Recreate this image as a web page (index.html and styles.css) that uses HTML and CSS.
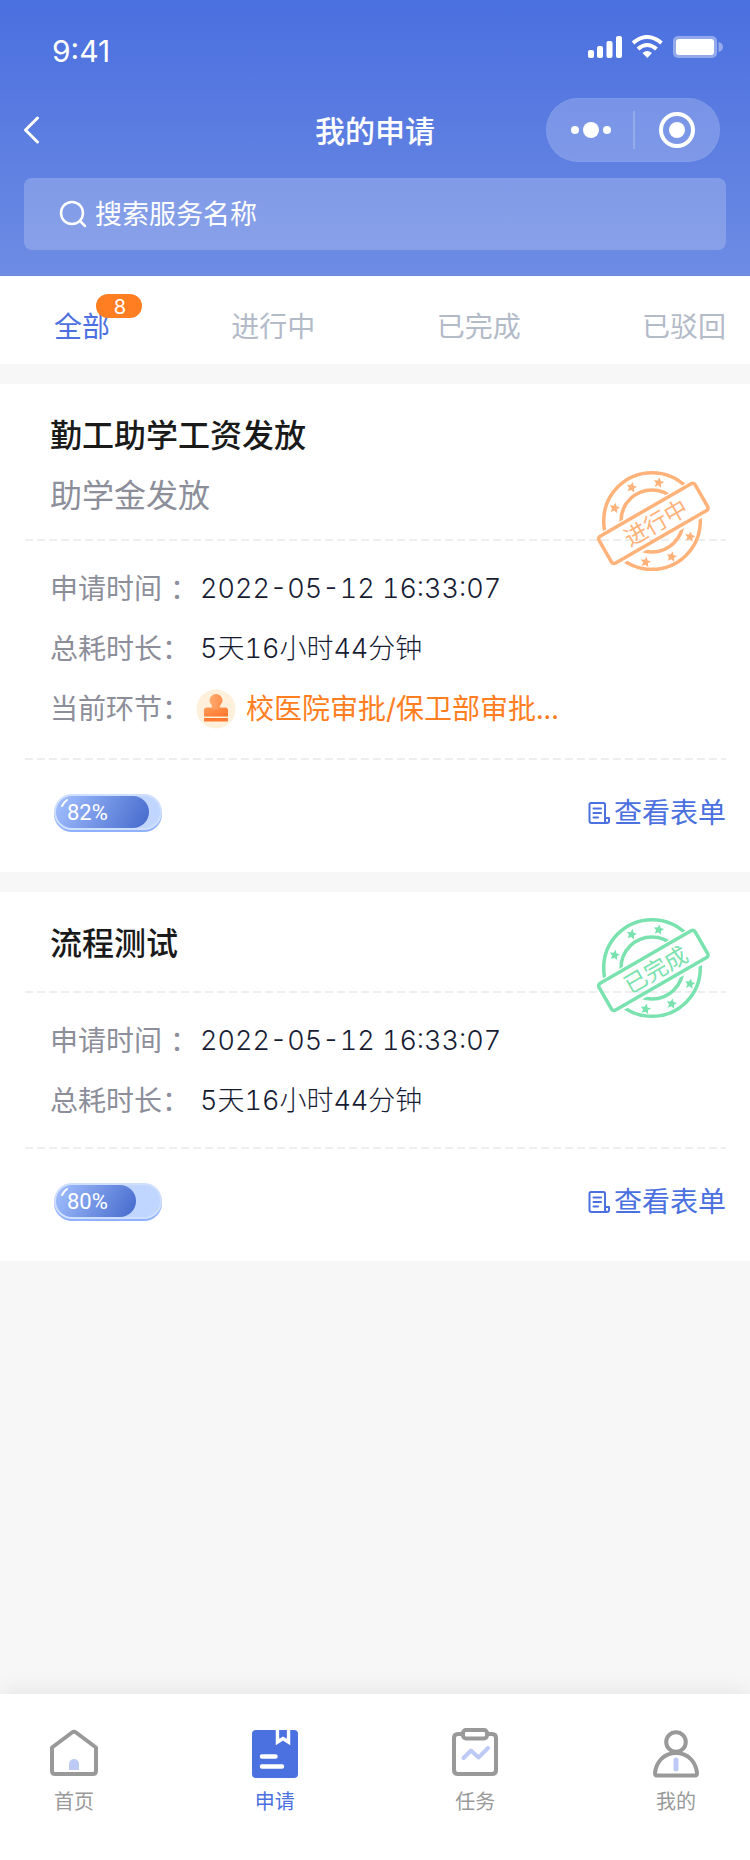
FILE: index.html
```html
<!DOCTYPE html>
<html lang="zh-CN">
<head>
    <meta charset="UTF-8">
    <meta name="viewport" content="width=device-width, initial-scale=1.0">
    <title>我的申请</title>
    <link rel="stylesheet" href="styles.css">
</head>
<body>
    <!-- общие фигуры для печатей -->
    <svg class="sprite" aria-hidden="true">
        <defs>
            <mask id="stampMask" maskUnits="userSpaceOnUse" x="0" y="0" width="122" height="112">
                <rect width="122" height="112" fill="#fff"/>
                <rect x="3" y="39" width="117" height="38" rx="5" fill="#000" transform="rotate(-30 61.3 57.7)"/>
            </mask>
            <path id="star" d="M0-5.4 1.6-1.9 5.2-1.6 2.5.9 3.3 4.6 0 2.7-3.3 4.6-2.5.9-5.2-1.6-1.6-1.9Z"/>
            <symbol id="stamp" viewBox="0 0 122 112">
                <g fill="none" stroke="currentColor" stroke-width="3.5">
                    <g mask="url(#stampMask)">
                        <circle cx="60" cy="55" r="48.3"/>
                        <circle cx="60" cy="55" r="31"/>
                    </g>
                    <rect x="6" y="42" width="111" height="31" rx="3" transform="rotate(-30 61.3 57.7)"/>
                </g>
                <g fill="currentColor">
                    <use href="#star" transform="translate(39.7 21.3) rotate(10)"/>
                    <use href="#star" transform="translate(66.7 16.7) rotate(10)"/>
                    <use href="#star" transform="translate(22.7 42) rotate(10)"/>
                    <use href="#star" transform="translate(98 70.7) rotate(10)"/>
                    <use href="#star" transform="translate(79.7 90.7) rotate(10)"/>
                    <use href="#star" transform="translate(53.7 96) rotate(10)"/>
                </g>
            </symbol>
            <symbol id="form" viewBox="0 0 24 24">
                <g fill="none" stroke="currentColor" stroke-width="2" stroke-linecap="round" stroke-linejoin="round">
                    <path d="M18 16V3.5Q18 2 16.500 2H4Q2.500 2 2.500 3.500V20Q2.500 22 4.500 22H20Q22 22 22 20V17H18V20Q18 22 20 22"/>
                    <path d="M6.500 7.500H14M6.500 12H14M6.500 16.500H11"/>
                </g>
            </symbol>
        </defs>
    </svg>

    <header class="header">
        <div class="status">
            <span class="status-time">9:41</span>
            <svg class="status-icons" width="136" height="24" viewBox="0 0 136 24" fill="#fff">
                <rect x="1" y="15" width="6" height="8" rx="2"/>
                <rect x="10" y="11" width="6" height="12" rx="2"/>
                <rect x="19.500" y="6" width="6" height="17" rx="2"/>
                <rect x="29" y="1" width="6" height="22" rx="2"/>
                <g fill="none" stroke="#fff" stroke-width="4">
                    <path d="M46 8Q60 -4 74.500 8"/>
                    <path d="M51 14Q60 6 69.500 14"/>
                </g>
                <path d="M60.300 23 55.500 18Q60.300 14 65 18Z"/>
                <rect x="86" y="1" width="44" height="22" rx="5" opacity=".38"/>
                <rect x="89" y="4" width="38" height="16" rx="3"/>
                <path d="M131.500 7Q136 8 136 12T131.500 17Z" opacity=".4"/>
            </svg>
        </div>
        <div class="nav">
            <button class="nav-back" type="button" aria-label="返回">
                <svg width="16" height="28" viewBox="0 0 16 28" fill="none" stroke="#fff" stroke-width="3" stroke-linecap="round" stroke-linejoin="round"><path d="M13.500 2 1.500 14 13.500 26"/></svg>
            </button>
            <h1 class="nav-title">我的申请</h1>
            <div class="capsule">
                <button type="button" aria-label="更多">
                    <svg width="40" height="16" viewBox="0 0 40 16" fill="#fff"><circle cx="4" cy="8" r="4"/><circle cx="20" cy="8" r="8"/><circle cx="36" cy="8" r="4"/></svg>
                </button>
                <span class="capsule-line"></span>
                <button type="button" aria-label="关闭">
                    <svg width="36" height="36" viewBox="0 0 36 36"><circle cx="18" cy="18" r="16" fill="none" stroke="#fff" stroke-width="4"/><circle cx="18" cy="18" r="8" fill="#fff"/></svg>
                </button>
            </div>
        </div>
        <label class="search">
            <svg width="28" height="28" viewBox="0 0 28 28" fill="none" stroke="#fff" stroke-width="2.500" stroke-linecap="round"><circle cx="13" cy="13" r="11"/><path d="M21 21 26 26"/></svg>
            <input type="text" placeholder="搜索服务名称" aria-label="搜索服务名称">
        </label>
    </header>

    <nav class="tabs">
        <a class="tab active" href="#">全部<span class="badge">8</span></a>
        <a class="tab" href="#">进行中</a>
        <a class="tab" href="#">已完成</a>
        <a class="tab" href="#">已驳回</a>
    </nav>

    <main class="list">
        <section class="card">
            <div class="card-head">
                <h2>勤工助学工资发放</h2>
                <p>助学金发放</p>
            </div>
            <dl class="card-info with-stage">
                <div class="row"><dt>申请时间 ：</dt><dd>2022-05-12 16:33:07</dd></div>
                <div class="row"><dt>总耗时长：</dt><dd>5天16小时44分钟</dd></div>
                <div class="row stage">
                    <dt>当前环节：</dt>
                    <dd>
                        <svg width="40" height="40" viewBox="0 0 40 40">
                            <defs>
                                <linearGradient id="sealTop" x1="0" x2="1"><stop offset="0" stop-color="#ffab70"/><stop offset="1" stop-color="#ff8f4d"/></linearGradient>
                                <linearGradient id="sealBase" x1="0" x2="1" y2="1"><stop offset="0" stop-color="#ff9c5c"/><stop offset="1" stop-color="#ff7226"/></linearGradient>
                            </defs>
                            <circle cx="20" cy="20" r="19.500" fill="#fff0dc"/>
                            <path d="M8 27.500V21Q8 18.500 10.500 18.500H29.500Q32 18.500 32 21V27.500Z" fill="url(#sealBase)"/>
                            <path d="M13.500 11.500A6.500 6.500 0 0 1 26.500 11.500C26.500 15 23 16 24 19Q20 22 16 19C17 16 13.500 15 13.500 11.500Z" fill="url(#sealTop)"/>
                            <rect x="8" y="29" width="24" height="3.500" rx="1" fill="#ff7a30"/>
                        </svg>
                        校医院审批/保卫部审批...
                    </dd>
                </div>
            </dl>
            <div class="card-foot">
                <div class="progress" role="progressbar" aria-valuenow="82" aria-label="82%">
                    <div class="progress-fill" style="width: 89%"><svg width="10" height="10" viewBox="0 0 10 10" fill="none" stroke="#fff" stroke-width="2" stroke-linecap="round"><path d="M2 8Q4 4 7 2"/></svg>82%</div>
                </div>
                <a class="card-link" href="#"><svg width="24" height="24"><use href="#form"/></svg>查看表单</a>
            </div>
            <svg class="stamp stamp-doing" width="122" height="112" viewBox="0 0 122 112">
                <use href="#stamp"/>
                <text x="64" y="65" transform="rotate(-30 64 57)">进行中</text>
            </svg>
        </section>

        <section class="card">
            <div class="card-head single">
                <h2>流程测试</h2>
            </div>
            <dl class="card-info">
                <div class="row"><dt>申请时间 ：</dt><dd>2022-05-12 16:33:07</dd></div>
                <div class="row"><dt>总耗时长：</dt><dd>5天16小时44分钟</dd></div>
            </dl>
            <div class="card-foot">
                <div class="progress" role="progressbar" aria-valuenow="80" aria-label="80%">
                    <div class="progress-fill" style="width: 77%"><svg width="10" height="10" viewBox="0 0 10 10" fill="none" stroke="#fff" stroke-width="2" stroke-linecap="round"><path d="M2 8Q4 4 7 2"/></svg>80%</div>
                </div>
                <a class="card-link" href="#"><svg width="24" height="24"><use href="#form"/></svg>查看表单</a>
            </div>
            <svg class="stamp stamp-done" width="122" height="112" viewBox="0 0 122 112">
                <use href="#stamp"/>
                <text x="64" y="65" transform="rotate(-30 64 57)">已完成</text>
            </svg>
        </section>
    </main>

    <nav class="tabbar">
        <a href="#">
            <svg width="48" height="50" viewBox="0 0 48 50">
                <path d="M2 19.500 22 4.500Q24 3 26 4.500L46 19.500V43Q46 46 43 46H5Q2 46 2 43Z" fill="none" stroke="#999" stroke-width="4" stroke-linejoin="round"/>
                <path d="M19 42V36A5 5 0 0 1 29 36V42Z" fill="#bdcaf5"/>
            </svg>
            首页
        </a>
        <a class="active" href="#">
            <svg width="48" height="50" viewBox="0 0 48 50">
                <rect x="1" y="2" width="46" height="48" rx="4" fill="#4b70e0"/>
                <path d="M26.500 2V14L32 10.500 37.500 14V2" fill="none" stroke="#fff" stroke-width="3.500"/>
                <path d="M28.500 2H35.500V9L32 6.500 28.500 9Z" fill="#4b70e0"/>
                <path d="M11 28.500H24.500M11 38.500H31" stroke="#fff" stroke-width="4.500" stroke-linecap="round"/>
            </svg>
            申请
        </a>
        <a href="#">
            <svg width="48" height="50" viewBox="0 0 48 50" fill="none" stroke="#999" stroke-width="4" stroke-linecap="round" stroke-linejoin="round">
                <path d="M12 6H7Q3 6 3 10V42Q3 46 7 46H41Q45 46 45 42V10Q45 6 41 6H36"/>
                <rect x="12" y="2" width="24" height="8.500" rx="3"/>
                <path d="M12.500 30 20 22.500 27.500 29.500 37 20" stroke="#bdcaf5"/>
            </svg>
            任务
        </a>
        <a href="#">
            <svg width="48" height="50" viewBox="0 0 48 50" fill="none" stroke="#999" stroke-width="4" stroke-linejoin="round">
                <circle cx="24" cy="14" r="9.800"/>
                <path d="M24 25C11 25 4 35 3 45Q3 47.500 5 47.500H43Q45 47.500 45 45C44 35 37 25 24 25Z"/>
                <path d="M24 32V41" stroke="#bdcaf5" stroke-width="5" stroke-linecap="round"/>
            </svg>
            我的
        </a>
    </nav>
</body>
</html>
```

FILE: styles.css
```css
* {
    margin: 0;
    padding: 0;
    box-sizing: border-box;
}
body {
    background: #f7f7f7;
    color: #171c33;
    font-family: Inter, 'Noto Sans CJK SC', sans-serif;
    font-size: 28px;
    min-height: 100vh;
    display: flex;
    flex-direction: column;
}
a {
    color: inherit;
    text-decoration: none;
}
button {
    background: none;
    border: none;
    cursor: pointer;
}
svg {
    display: block;
    flex-shrink: 0;
}
.sprite {
    position: absolute;
    width: 0;
    height: 0;
}

/* шапка */
.header {
    background: linear-gradient(180deg, #4a6fdf, #6e8ce4);
    color: #fff;
    padding: 35px 24px 26px;
}
.status {
    display: flex;
    justify-content: space-between;
    align-items: flex-start;
    padding: 0 3px 31px 28px;
}
.status-time {
    font-size: 30px;
    line-height: 32px;
}
.nav {
    display: grid;
    grid-template-columns: 1fr auto 1fr;
    align-items: center;
    margin-bottom: 16px;
}
.nav-back {
    justify-self: start;
}
.nav-title {
    padding-top: 2px;
    font-size: 30px;
    line-height: 44px;
    font-weight: 500;
}
.capsule {
    justify-self: end;
    display: flex;
    align-items: center;
    width: 174px;
    height: 64px;
    margin-right: 6px;
    padding-left: 2px;
    border-radius: 32px;
    border: 1px solid rgba(255, 255, 255, 0.04);
    background: rgba(255, 255, 255, 0.2);
}
.capsule button {
    flex: 1;
    display: flex;
    justify-content: center;
}
.capsule-line {
    width: 2px;
    height: 38px;
    background: rgba(255, 255, 255, 0.2);
}
.search {
    display: flex;
    align-items: center;
    gap: 8px;
    height: 72px;
    padding: 0 35px;
    border-radius: 8px;
    background: rgba(255, 255, 255, 0.2);
}
.search input {
    flex: 1;
    min-width: 0;
    padding-top: 2px;
    border: none;
    outline: none;
    background: none;
    color: #fff;
    font-family: inherit;
    font-size: 27px;
    line-height: 40px;
}
.search input::placeholder {
    color: #fff;
}

/* вкладки */
.tabs {
    display: flex;
    justify-content: space-between;
    padding: 31px 24px 17px 54px;
    background: #fff;
    color: #b3bac8;
    line-height: 40px;
}
.tab {
    position: relative;
}
.tab.active {
    color: #4b70e0;
}
.badge {
    position: absolute;
    top: -13px;
    left: 42px;
    width: 46px;
    height: 24px;
    padding-left: 2px;
    border-radius: 12px;
    background: #ff7e22;
    color: #fff;
    font-size: 20px;
    line-height: 26px;
    text-align: center;
}

/* карточки */
.list {
    display: flex;
    flex-direction: column;
    gap: 20px;
    padding: 20px 0;
}
.card {
    position: relative;
    background: #fff;
    padding: 22px 24px 0;
}
.card-head {
    padding: 0 26px 13px;
}
.card-head.single {
    padding-bottom: 17px;
}
.card-head h2,
.card-head p {
    font-size: 32px;
    line-height: 60px;
}
.card-head h2 {
    color: #1a1a1a;
    font-weight: 500;
}
.card-head p {
    color: #8c8e9a;
}
.card-info {
    padding: 20px 26px 16px;
    background: repeating-linear-gradient(90deg, #eee 0, #eee 8px, transparent 8px, transparent 12px) 1px 0 / 100% 2px no-repeat;
}
.card-info.with-stage {
    padding-bottom: 19px;
}
.row {
    display: flex;
    align-items: center;
    line-height: 60px;
}
.row dt {
    width: 150px;
    color: #8c8e9a;
    white-space: nowrap;
}
.row dd {
    font-size: 27px;
    font-weight: 300;
    font-variant-numeric: tabular-nums;
}
.stage dt {
    width: 146px;
}
.stage dd {
    display: flex;
    align-items: center;
    gap: 10px;
    color: #ff7e22;
    font-size: 28px;
    font-weight: 400;
}
.card-foot {
    display: flex;
    justify-content: space-between;
    align-items: center;
    padding: 35px 0 39px 30px;
    background: repeating-linear-gradient(90deg, #eee 0, #eee 8px, transparent 8px, transparent 12px) 1px 0 / 100% 2px no-repeat;
}
.progress {
    width: 108px;
    height: 36px;
    margin-bottom: 2px;
    border: 2px solid #cfdfff;
    border-radius: 18px;
    background: #c0d6ff;
    box-shadow: 0 2px 0 #8fb1ff;
}
.progress-fill {
    position: relative;
    height: 32px;
    padding-left: 11px;
    border-radius: 16px;
    background: linear-gradient(120deg, #a3c0ff, #4469cb);
    color: #fff;
    font-family: Roboto, sans-serif;
    font-size: 22px;
    line-height: 34px;
}
.progress-fill svg {
    position: absolute;
    top: 2px;
    left: 4px;
}
.card-link {
    display: flex;
    align-items: center;
    gap: 3px;
    color: #4b70e0;
    line-height: 40px;
}
.stamp {
    position: absolute;
    top: 82px;
    right: 36px;
}
.stamp text {
    fill: currentColor;
    font-size: 23px;
    text-anchor: middle;
}
.row dd,
.stamp text {
    white-space: nowrap;
}
.stamp-doing {
    color: #ffb27a;
}
.stamp-done {
    top: 21px;
    color: #7ae2ae;
}

/* нижнее меню */
.tabbar {
    display: flex;
    justify-content: space-between;
    margin-top: auto;
    padding: 34px 50px 43px;
    background: #fff;
    box-shadow: 0 -4px 20px rgba(0, 0, 0, 0.07);
    color: #999;
    font-size: 20px;
    line-height: 30px;
}
.tabbar a {
    display: flex;
    flex-direction: column;
    align-items: center;
    gap: 9px;
    width: 48px;
}
.tabbar .active {
    color: #4b70e0;
}
```
